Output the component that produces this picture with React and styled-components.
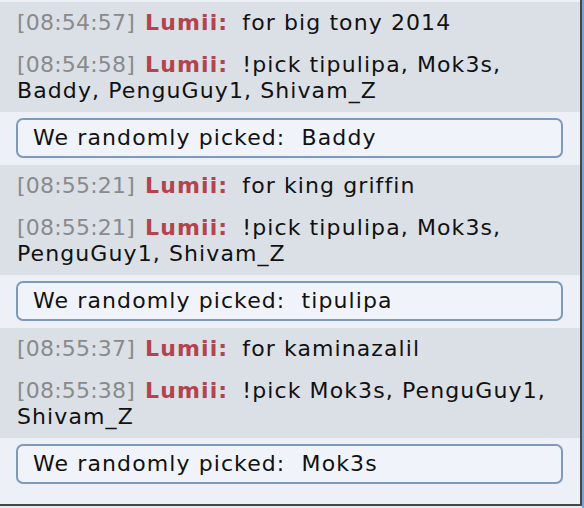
import React from "react";
import styled, { createGlobalStyle } from "styled-components";

const Global = createGlobalStyle`
  html, body { margin: 0; padding: 0; }
  body { background: #7aa3d6; font-family: "DejaVu Sans", Verdana, sans-serif; }
`;

const Frame = styled.div`
  width: 584px;
  height: 508px;
  overflow: hidden;
  background: #7aa3d6;
  display: flex;
  flex-direction: column;
`;

const Panel = styled.div`
  box-sizing: border-box;
  width: 582px;
  height: 506px;
  flex: none;
  padding-top: 2px;
  background: #edf1f7;
  border-right: 2px solid #464646;
  border-bottom: 2px solid #464646;
  display: flex;
  flex-direction: column;
`;

const BottomStrip = styled.div`
  width: 582px;
  height: 2px;
  background: #e6ebf1;
`;

const UserBlock = styled.div`
  background: #dbe0e7;
  padding: 0 17px;
`;

const Message = styled.div`
  padding: 8px 0;
  font-size: 22px;
  line-height: 26px;
  color: #111;
  letter-spacing: 1.1px;
`;

const Time = styled.span`
  color: #8a8a8a;
  letter-spacing: 0.2px;
  margin-right: 2px;
`;

const Name = styled.span`
  color: #b5434f;
  font-weight: bold;
  margin-right: 6px;
`;

const BotBlock = styled.div`
  padding: 6px 17px ${(p) => (p.$last ? "18px" : "7px")} 16px;
`;

const BotBox = styled.div`
  box-sizing: border-box;
  height: 40px;
  border: 2px solid #7d99bc;
  border-radius: 7px;
  background: #f0f4fa;
  padding: 0 15px;
  font-size: 22px;
  line-height: 36px;
  letter-spacing: 1.1px;
  color: #111;
  white-space: pre;
`;

const data = [
  {
    msgs: [
      ["08:54:57", "for big tony 2014"],
      ["08:54:58", "!pick tipulipa, Mok3s, Baddy, PenguGuy1, Shivam_Z"],
    ],
    pick: "Baddy",
  },
  {
    msgs: [
      ["08:55:21", "for king griffin"],
      ["08:55:21", "!pick tipulipa, Mok3s, PenguGuy1, Shivam_Z"],
    ],
    pick: "tipulipa",
  },
  {
    msgs: [
      ["08:55:37", "for kaminazalil"],
      ["08:55:38", "!pick Mok3s, PenguGuy1, Shivam_Z"],
    ],
    pick: "Mok3s",
  },
];

export default function App() {
  return (
    <>
      <Global />
      <Frame>
        <Panel>
          {data.map((g, i) => (
            <React.Fragment key={i}>
              <UserBlock>
                {g.msgs.map(([t, txt], j) => (
                  <Message key={j}>
                    <Time>[{t}]</Time> <Name>Lumii:</Name> {txt}
                  </Message>
                ))}
              </UserBlock>
              <BotBlock $last={i === data.length - 1}>
                <BotBox>{"We randomly picked:  " + g.pick}</BotBox>
              </BotBlock>
            </React.Fragment>
          ))}
        </Panel>
        <BottomStrip />
      </Frame>
    </>
  );
}
